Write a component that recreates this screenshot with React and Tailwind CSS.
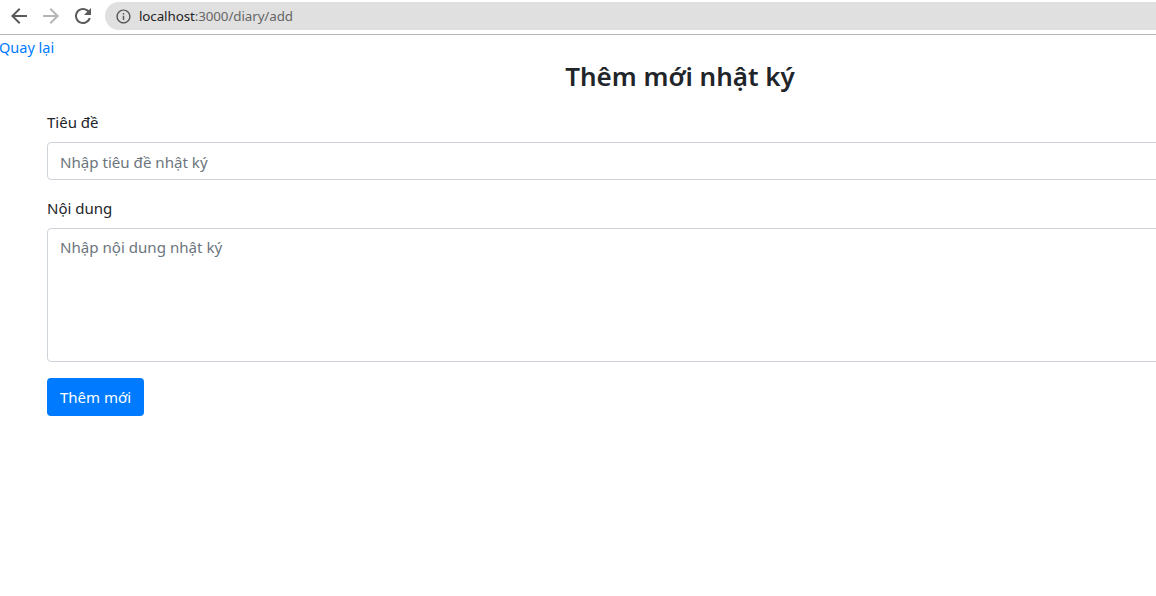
const font = "font-['Noto_Sans','Open_Sans',sans-serif]";

function Icon({ d, className }) {
  return (
    <svg viewBox="0 0 24 24" fill="currentColor" className={className}>
      <path d={d} />
    </svg>
  );
}

function BrowserBar() {
  return (
    <div className="flex h-[35px] items-start border-b border-[#b4b4b4] bg-white">
      <div className="flex h-8 items-center gap-[8px] pl-[7px] pr-[10px]">
        <Icon d="M20 11H7.83l5.59-5.59L12 4l-8 8 8 8 1.41-1.41L7.83 13H20v-2z" className="h-6 w-6 text-[#5a5a5a]" />
        <Icon d="M12 4l-1.41 1.41L16.17 11H4v2h12.17l-5.58 5.59L12 20l8-8z" className="h-6 w-6 text-[#b5b5b5]" />
        <Icon
          d="M17.65 6.35C16.2 4.9 14.21 4 12 4c-4.42 0-7.99 3.58-7.99 8s3.57 8 7.99 8c3.73 0 6.84-2.55 7.73-6h-2.08c-.82 2.33-3.04 4-5.65 4-3.31 0-6-2.69-6-6s2.69-6 6-6c1.66 0 3.14.69 4.22 1.78L13 11h7V4l-2.35 2.35z"
          className="h-6 w-6 text-[#5a5a5a]"
        />
      </div>
      <div className="mt-[2px] flex h-[28px] flex-1 items-center gap-[7px] rounded-l-[14px] bg-[#e0e0e0] pl-[10px]">
        <Icon
          d="M11 7h2v2h-2zm0 4h2v6h-2zm1-9C6.48 2 2 6.48 2 12s4.48 10 10 10 10-4.48 10-10S17.52 2 12 2zm0 18c-4.41 0-8-3.59-8-8s3.59-8 8-8 8 3.59 8 8-3.59 8-8 8z"
          className="h-[17px] w-[17px] text-[#555]"
        />
        <span className="pt-[1px] text-[13.4px] leading-none tracking-[-0.1px] text-[#222]">
          localhost<span className="text-[#666]">:3000/diary/add</span>
        </span>
      </div>
    </div>
  );
}

export default function App() {
  return (
    <div className={`h-[596px] w-[1156px] overflow-hidden bg-white ${font}`}>
      <BrowserBar />
      <a href="#" className="-ml-[1px] block h-[24px] text-[14.5px] leading-[24px] text-[#007bff]">
        Quay lại
      </a>
      <h1 className="pl-[204px] text-center text-[26px] font-semibold leading-[35px] text-[#212529]">
        Thêm mới nhật ký
      </h1>
      <form className="w-[1300px] pl-[47px] pt-[16px]">
        <div className="mb-[16px]">
          <label className="mb-[8px] block text-[15px] leading-[24px] text-[#212529]">Tiêu đề</label>
          <input
            placeholder="Nhập tiêu đề nhật ký"
            className="block h-[38px] w-full rounded-[4px] border border-[#ced4da] px-[12px] pt-[1px] text-[15.1px] placeholder:text-[#6c757d]"
          />
        </div>
        <div className="mb-[16px]">
          <label className="mb-[8px] block text-[15px] leading-[24px] text-[#212529]">Nội dung</label>
          <textarea
            placeholder="Nhập nội dung nhật ký"
            className="block h-[134px] w-full rounded-[4px] border border-[#ced4da] px-[12px] py-[6px] text-[15.1px] leading-[24px] placeholder:text-[#6c757d]"
          />
        </div>
        <button
          type="button"
          className="h-[38px] rounded-[4px] bg-[#007bff] px-[13px] text-[15px] text-white"
        >
          Thêm mới
        </button>
      </form>
    </div>
  );
}
